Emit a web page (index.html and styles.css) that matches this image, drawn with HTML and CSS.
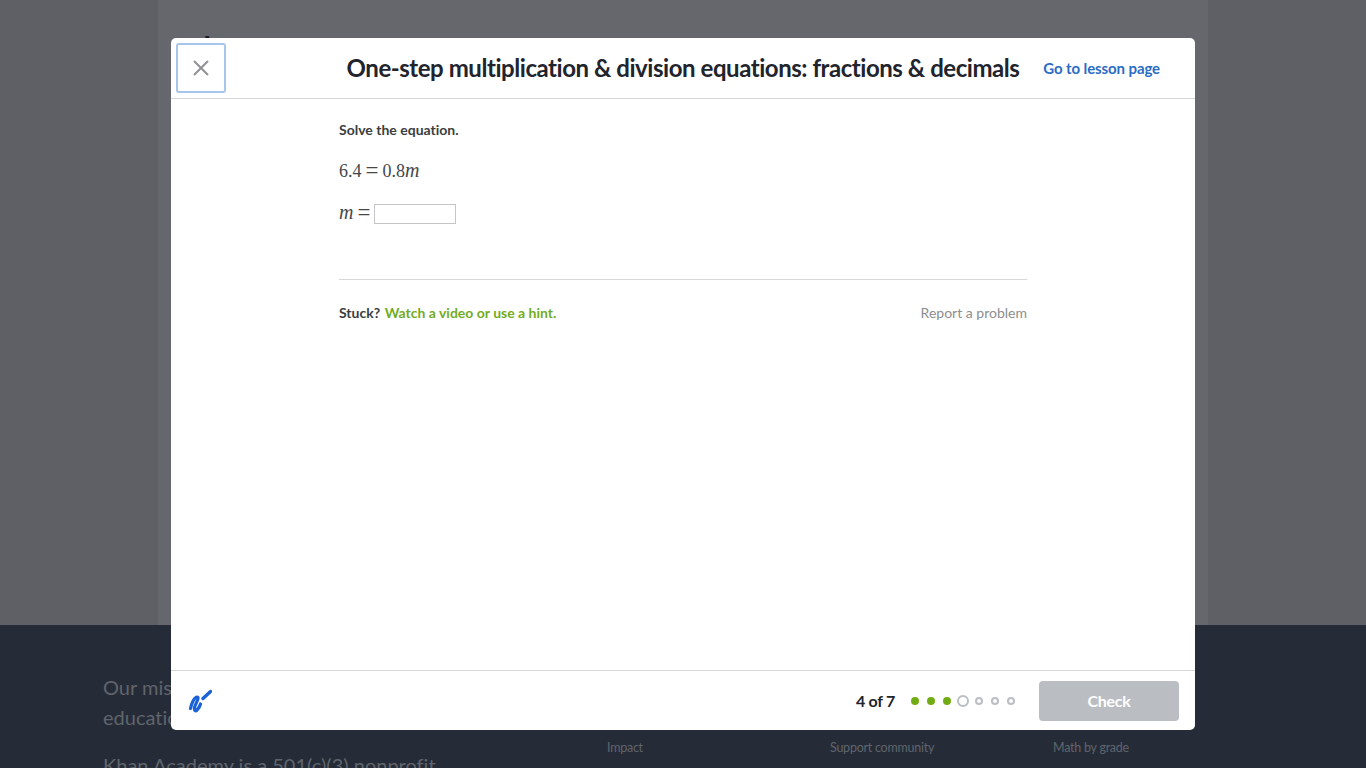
FILE: index.html
```html
<!DOCTYPE html>
<html lang="en">
<head>
    <meta charset="UTF-8">
    <meta name="viewport" content="width=device-width, initial-scale=1.0">
    <title>One-step multiplication &amp; division equations: fractions &amp; decimals</title>
    <link rel="stylesheet" href="styles.css">
</head>
<body>
    <!-- Page behind the dialog -->
    <main class="page-column">
        <h2 class="page-heading">Lesson summary</h2>
    </main>

    <footer class="site-footer">
        <div class="mission">
            <p class="mission-lead">Our mission is to provide a free, world-class education for anyone, anywhere.</p>
            <p class="mission-note">Khan Academy is a 501(c)(3) nonprofit</p>
        </div>
        <div class="footer-link">Impact</div>
        <div class="footer-link">Support community</div>
        <div class="footer-link">Math by grade</div>
    </footer>

    <!-- Exercise dialog -->
    <div class="dialog">
        <header class="dialog-header">
            <button class="close-btn" aria-label="Close">
                <svg width="16" height="16" viewBox="0 0 16 16"><path d="M1 1L15 15M15 1L1 15" stroke="#8f9194" stroke-width="2" fill="none"/></svg>
            </button>
            <h1 class="dialog-title">One-step multiplication &amp; division equations: fractions &amp; decimals</h1>
            <a class="lesson-link" href="#">Go to lesson page</a>
        </header>

        <section class="dialog-body">
            <div class="exercise">
                <p class="prompt">Solve the equation.</p>
                <p class="math">6.4<span class="eq">=</span>0.8<i class="var">m</i></p>
                <div class="answer-row">
                    <span class="math"><i class="var">m</i><span class="eq">=</span></span>
                    <input class="answer-input" type="text">
                </div>
                <div class="help-row">
                    <div class="stuck"><b>Stuck?</b> <a class="hint-link" href="#">Watch a video or use a hint.</a></div>
                    <a class="report-link" href="#">Report a problem</a>
                </div>
            </div>
        </section>

        <footer class="dialog-footer">
            <svg class="scratch-icon" width="24" height="24" viewBox="0 0 24 24">
                <path d="M2.5 19.5C3.5 14 6.5 8 9 8C12 8 7.5 14.5 6.5 18.5C6 21.5 7.5 22.5 9 21C10.5 19.5 12 17 12.5 15" stroke="#1b62d8" stroke-width="3.2" stroke-linecap="round" stroke-linejoin="round" fill="none"/>
                <path d="M15 9.5L22.5 2.5" stroke="#1b62d8" stroke-width="3.4" stroke-linecap="round" fill="none"/>
            </svg>
            <div class="progress-text">4 of 7</div>
            <div class="dots">
                <span class="dot done"></span>
                <span class="dot done"></span>
                <span class="dot done"></span>
                <span class="dot current"></span>
                <span class="dot"></span>
                <span class="dot"></span>
                <span class="dot"></span>
            </div>
            <button class="check-btn">Check</button>
        </footer>
    </div>
</body>
</html>
```

FILE: styles.css
```css
/* Basic Styles */
html, body {
    height: 768px;
    overflow: hidden;
}

body {
    margin: 0;
    font-family: Lato, "Open Sans", sans-serif;
    font-variant-ligatures: none;
    background-color: #5f6065;
}

/* Page behind the dialog */
.page-column {
    width: 1050px;
    height: 625px;
    margin: 0 auto;
    padding: 29px 0 0 45px;
    box-sizing: border-box;
    background-color: #66676c;
}

.page-heading {
    margin: 0;
    font-size: 28px;
    color: #1c1d20;
}

.site-footer {
    display: grid;
    grid-template-columns: 504px 223px 223px 1fr;
    height: 143px;
    padding: 0 0 0 103px;
    background-color: #262c37;
    color: #5f646c;
}

.mission-lead {
    width: 430px;
    margin: 47px 0 0;
    font-size: 20px;
    line-height: 30px;
}

.mission-note {
    margin: 18px 0 0;
    font-size: 20px;
    line-height: 30px;
    white-space: nowrap;
}

.footer-link {
    padding-top: 115px;
    font-size: 12.5px;
    letter-spacing: -0.25px;
    line-height: 15px;
}

/* Dialog */
.dialog {
    position: absolute;
    top: 38px;
    left: 171px;
    width: 1024px;
    height: 692px;
    display: flex;
    flex-direction: column;
    background-color: white;
    border-radius: 5px;
}

.dialog-header {
    display: grid;
    grid-template-columns: 1fr auto 1fr;
    align-items: center;
    height: 60px;
    padding: 0 5px;
    border-bottom: 1px solid #d6d8da;
}

.close-btn {
    width: 50px;
    height: 50px;
    display: flex;
    align-items: center;
    justify-content: center;
    padding: 0;
    background: none;
    border: 2px solid #a8c5ea;
    border-radius: 3px;
}

.dialog-title {
    margin: 0 0 2px;
    font-size: 24px;
    font-weight: 700;
    letter-spacing: -0.45px;
    color: #21242c;
    white-space: nowrap;
}

.lesson-link {
    justify-self: end;
    margin-right: 30px;
    font-size: 15px;
    font-weight: 700;
    letter-spacing: -0.1px;
    color: #2a6cc4;
    text-decoration: none;
}

/* Exercise */
.dialog-body {
    flex: 1;
}

.exercise {
    width: 688px;
    margin: 0 auto;
    padding-top: 22px;
    font-size: 14px;
    color: #3b3e40;
}

.prompt {
    margin: 0;
    font-weight: 700;
    line-height: 17px;
}

.math {
    font-family: "Liberation Serif", serif;
    font-size: 18px;
    color: #44474a;
}

.var {
    font-size: 20px;
    line-height: 0;
}

.eq {
    margin: 0 4px;
    font-size: 23px;
    font-weight: 400;
    line-height: 0;
    vertical-align: -1px;
}

.exercise > .math {
    margin: 22px 0 0;
    line-height: 22px;
}

.answer-row {
    display: flex;
    align-items: center;
    margin-top: 21px;
}

.answer-input {
    width: 82px;
    height: 20px;
    padding: 0;
    box-sizing: border-box;
    border: 1px solid #c4c5c7;
    background: white;
}

.help-row {
    display: flex;
    justify-content: space-between;
    align-items: center;
    margin-top: 55px;
    padding-top: 24px;
    border-top: 1px solid #d6d8da;
}

.stuck b {
    margin-right: 1px;
}

.hint-link {
    font-weight: 700;
    color: #72ac1e;
    text-decoration: none;
}

.report-link {
    color: #8c8d8f;
    text-decoration: none;
}

/* Dialog footer */
.dialog-footer {
    display: flex;
    align-items: center;
    height: 59px;
    padding: 0 16px 0 17px;
    border-top: 1px solid #d6d8da;
}

.scratch-icon {
    margin-right: auto;
}

.progress-text {
    margin-right: 12px;
    font-size: 16px;
    font-weight: 700;
    letter-spacing: -0.3px;
    color: #21242c;
}

.dots {
    display: flex;
    align-items: center;
    margin-right: 20px;
}

.dot {
    width: 8px;
    height: 8px;
    margin: 0 4px;
    box-sizing: border-box;
    border: 2px solid #babec2;
    border-radius: 50%;
}

.dot.done {
    border-color: #71ac14;
    background-color: #71ac14;
}

.dot.current {
    width: 12px;
    height: 12px;
    margin: 0 2px;
}

.check-btn {
    width: 140px;
    height: 40px;
    font-family: inherit;
    font-size: 16px;
    font-weight: 700;
    letter-spacing: -0.3px;
    color: white;
    background-color: #babec2;
    border: none;
    border-radius: 4px;
}
```
